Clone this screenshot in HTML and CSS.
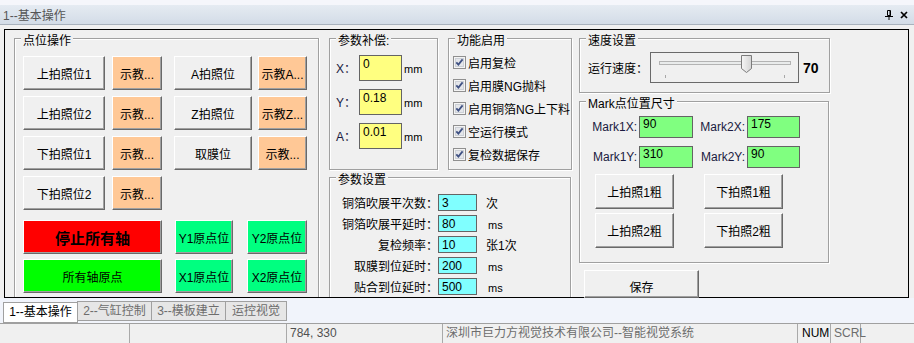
FILE: index.html
```html
<!DOCTYPE html>
<html lang="zh-CN">
<head>
    <meta charset="UTF-8">
    <title>1--基本操作</title>
    <link rel="stylesheet" href="styles.css">
</head>
<body>
    <div class="topgap"></div>
    <div class="titlebar">
        <span class="title">1--基本操作</span>
        <span class="tb-icons">
            <svg width="8" height="10" viewBox="0 0 8 10"><path d="M2.5 .5h3v5h-3z" fill="none" stroke="#000"/><path d="M5 1v5" stroke="#000"/><path d="M0 6.5h8M4 6v4" stroke="#000"/></svg>
            <svg width="8" height="8" viewBox="0 0 8 8"><path d="M1 1l6 6M7 1L1 7" stroke="#000" stroke-width="1.7"/></svg>
        </span>
    </div>

    <div class="frame">
        <!-- 点位操作 -->
        <div class="group open g-points">
            <div class="gtitle">点位操作</div>
            <div class="pt-grid">
                <button class="btn btn-pos">上拍照位1</button>
                <button class="btn teach btn-teach">示教...</button>
                <button class="btn btn-pos2">A拍照位</button>
                <button class="btn teach btn-teach2">示教A...</button>

                <button class="btn btn-pos">上拍照位2</button>
                <button class="btn teach btn-teach">示教...</button>
                <button class="btn btn-pos2">Z拍照位</button>
                <button class="btn teach btn-teach2">示教Z...</button>

                <button class="btn btn-pos">下拍照位1</button>
                <button class="btn teach btn-teach">示教...</button>
                <button class="btn btn-pos2">取膜位</button>
                <button class="btn teach btn-teach2">示教...</button>

                <button class="btn btn-pos">下拍照位2</button>
                <button class="btn teach btn-teach">示教...</button>
            </div>
            <div class="axis-grid">
                <button class="btn btn-stop">停止所有轴</button>
                <button class="btn btn-origin">Y1原点位</button>
                <button class="btn btn-origin w60">Y2原点位</button>
                <button class="btn btn-home">所有轴原点</button>
                <button class="btn btn-origin">X1原点位</button>
                <button class="btn btn-origin w60">X2原点位</button>
            </div>
        </div>

        <div class="col-mid">
            <div class="mid-top">
                <!-- 参数补偿 -->
                <div class="group g-comp">
                    <div class="gtitle">参数补偿:</div>
                    <div class="comp-rows">
                        <div class="comp-row"><label>X：</label><input class="field yellow" value="0"><span class="unit">mm</span></div>
                        <div class="comp-row"><label>Y：</label><input class="field yellow" value="0.18"><span class="unit">mm</span></div>
                        <div class="comp-row"><label>A：</label><input class="field yellow" value="0.01"><span class="unit">mm</span></div>
                    </div>
                </div>
                <!-- 功能启用 -->
                <div class="group g-func">
                    <div class="gtitle">功能启用</div>
                    <div class="checks">
                        <div class="check"><svg class="cb" width="13" height="13" viewBox="0 0 13 13"><rect x=".5" y=".5" width="12" height="12" fill="#f4f4f4" stroke="#8f8f8f"/><rect x="2.5" y="2.5" width="8" height="8" fill="#e4e6ea" stroke="#ccd0d6"/><path d="M3.3 6.3l2.1 2.3 4.2-5.2" fill="none" stroke="#3f5183" stroke-width="1.8"/></svg>启用复检</div>
                        <div class="check"><svg class="cb" width="13" height="13" viewBox="0 0 13 13"><rect x=".5" y=".5" width="12" height="12" fill="#f4f4f4" stroke="#8f8f8f"/><rect x="2.5" y="2.5" width="8" height="8" fill="#e4e6ea" stroke="#ccd0d6"/><path d="M3.3 6.3l2.1 2.3 4.2-5.2" fill="none" stroke="#3f5183" stroke-width="1.8"/></svg>启用膜NG抛料</div>
                        <div class="check"><svg class="cb" width="13" height="13" viewBox="0 0 13 13"><rect x=".5" y=".5" width="12" height="12" fill="#f4f4f4" stroke="#8f8f8f"/><rect x="2.5" y="2.5" width="8" height="8" fill="#e4e6ea" stroke="#ccd0d6"/><path d="M3.3 6.3l2.1 2.3 4.2-5.2" fill="none" stroke="#3f5183" stroke-width="1.8"/></svg>启用铜箔NG上下料</div>
                        <div class="check"><svg class="cb" width="13" height="13" viewBox="0 0 13 13"><rect x=".5" y=".5" width="12" height="12" fill="#f4f4f4" stroke="#8f8f8f"/><rect x="2.5" y="2.5" width="8" height="8" fill="#e4e6ea" stroke="#ccd0d6"/><path d="M3.3 6.3l2.1 2.3 4.2-5.2" fill="none" stroke="#3f5183" stroke-width="1.8"/></svg>空运行模式</div>
                        <div class="check"><svg class="cb" width="13" height="13" viewBox="0 0 13 13"><rect x=".5" y=".5" width="12" height="12" fill="#f4f4f4" stroke="#8f8f8f"/><rect x="2.5" y="2.5" width="8" height="8" fill="#e4e6ea" stroke="#ccd0d6"/><path d="M3.3 6.3l2.1 2.3 4.2-5.2" fill="none" stroke="#3f5183" stroke-width="1.8"/></svg>复检数据保存</div>
                    </div>
                </div>
            </div>
            <!-- 参数设置 -->
            <div class="group open g-param">
                <div class="gtitle">参数设置</div>
                <div class="param-rows">
                    <div class="param-row"><label>铜箔吹展平次数：</label><input class="pfield" value="3"><span class="punit">次</span></div>
                    <div class="param-row"><label>铜箔吹展平延时：</label><input class="pfield" value="80"><span class="punit ms">ms</span></div>
                    <div class="param-row"><label>复检频率：</label><input class="pfield" value="10"><span class="punit">张1次</span></div>
                    <div class="param-row"><label>取膜到位延时：</label><input class="pfield" value="200"><span class="punit ms">ms</span></div>
                    <div class="param-row"><label>贴合到位延时：</label><input class="pfield" value="500"><span class="punit ms">ms</span></div>
                </div>
            </div>
        </div>

        <div class="col-right">
            <!-- 速度设置 -->
            <div class="group g-speed">
                <div class="gtitle">速度设置</div>
                <div class="speed-row">
                    <label>运行速度：</label>
                    <div class="slider">
                        <svg width="147" height="29" viewBox="0 0 147 29">
                            <defs>
                                <linearGradient id="thumb" x1="0" x2="1">
                                    <stop offset="0" stop-color="#f6f6f6"/>
                                    <stop offset="1" stop-color="#d4d4d4"/>
                                </linearGradient>
                            </defs>
                            <rect x="8.5" y="8.5" width="131" height="3" fill="#e9ebeb" stroke="#b3b3b3"/>
                            <path d="M14.5 22v3M133.5 22v3" stroke="#a8a8a8"/>
                            <path d="M90.5 2.5h10v13l-5 4-5-4z" fill="url(#thumb)" stroke="#7b7b7b"/>
                        </svg>
                    </div>
                    <span class="speed-val">70</span>
                </div>
            </div>
            <!-- Mark点位置尺寸 -->
            <div class="group g-mark">
                <div class="gtitle">Mark点位置尺寸</div>
                <div class="mark-grid">
                    <label>Mark1X:</label><input class="mfield" value="90">
                    <label>Mark2X:</label><input class="mfield" value="175">
                    <label>Mark1Y:</label><input class="mfield" value="310">
                    <label>Mark2Y:</label><input class="mfield" value="90">
                </div>
                <div class="mark-btns">
                    <button class="btn">上拍照1粗</button>
                    <button class="btn">下拍照1粗</button>
                    <button class="btn">上拍照2粗</button>
                    <button class="btn">下拍照2粗</button>
                </div>
            </div>
            <button class="btn btn-save">保存</button>
        </div>
    </div>

    <div class="tabs">
        <div class="tab active">1--基本操作</div>
        <div class="tab">2--气缸控制</div>
        <div class="tab">3--模板建立</div>
        <div class="tab tab-short">运控视觉</div>
    </div>

    <div class="status">
        <div class="cell c1"></div>
        <div class="cell c2"></div>
        <div class="cell c3">784, 330</div>
        <div class="cell c4">深圳市巨力方视觉技术有限公司--智能视觉系统</div>
        <div class="cell c5">NUM</div>
        <div class="cell c6">SCRL</div>
    </div>
</body>
</html>
```

FILE: styles.css
```css
* {
    margin: 0;
    padding: 0;
    box-sizing: border-box;
}

body {
    width: 914px;
    height: 343px;
    overflow: hidden;
    background: #f0f0f0;
    font-family: "Liberation Sans", "Noto Sans CJK SC", sans-serif;
    font-size: 12px;
    color: #000;
}

button, input {
    font-family: inherit;
    font-size: 12px;
    color: #000;
}

.topgap {
    height: 5px;
    background: #f5f6fb;
}

.titlebar {
    height: 20px;
    display: flex;
    align-items: center;
    justify-content: space-between;
    padding: 0 6px 0 3px;
    background: linear-gradient(#e5ebf2, #d3dce7);
    border-bottom: 1px solid #a9b2bd;
    color: #555;
}

.tb-icons {
    display: flex;
    align-items: center;
    gap: 7px;
}

.frame {
    margin: 4px 0 0 4px;
    width: 905px;
    height: 269px;
    border: 1px solid #000;
    display: flex;
    align-items: flex-start;
    padding: 8px 0 0 9px;
}

/* group boxes */
.group {
    border: 1px solid #a0a0a0;
    box-shadow: inset 1px 1px 0 #fff, 1px 1px 0 #fff;
}

.group.open {
    border-bottom: 0;
    box-shadow: inset 1px 1px 0 #fff, 1px 0 0 #fff;
}

.gtitle {
    width: fit-content;
    margin: -5px 0 0 6px;
    padding: 0 2px;
    line-height: 14px;
    background: #f0f0f0;
}

/* buttons */
.btn {
    background: #f0f0f0;
    border: 1px solid;
    border-color: #fff #696969 #696969 #fff;
    box-shadow: inset -1px -1px 0 #a0a0a0;
    height: 100%;
    cursor: pointer;
}

.teach {
    background: #ffc896;
}

.g-points {
    width: 305px;
    height: 259px;
    margin-right: 10px;
}

.pt-grid {
    display: grid;
    grid-template-columns: 89px 62px 84px 49px;
    grid-auto-rows: 34px;
    row-gap: 6px;
    margin: 8px 0 0 8px;
}

.btn-pos { width: 82px; }
.btn-teach { width: 50px; }
.btn-pos2 { width: 78px; }
.btn-teach2 { width: 49px; }

.axis-grid {
    display: grid;
    grid-template-columns: 152px 72px 60px;
    grid-auto-rows: 34px;
    row-gap: 5px;
    margin: 10px 0 0 8px;
}

.btn-stop {
    width: 139px;
    background: #ff0000;
    font-size: 15px;
    font-weight: bold;
}

.btn-home {
    width: 139px;
    background: #00ff00;
}

.btn-origin {
    width: 58px;
    background: #00ff80;
}

.btn-origin.w60 {
    width: 60px;
}

/* middle column */
.col-mid {
    width: 243px;
    margin-right: 7px;
}

.mid-top {
    display: flex;
    gap: 10px;
}

.g-comp {
    width: 109px;
    height: 132px;
}

.g-func {
    width: 124px;
    height: 132px;
}

.comp-rows {
    display: flex;
    flex-direction: column;
    gap: 8px;
    margin: 7px 0 0 6px;
}

.comp-row {
    display: flex;
    align-items: flex-start;
}

.comp-row label {
    width: 23px;
    margin-top: 4px;
    color: #1a1a40;
}

.field {
    width: 43px;
    height: 26px;
    border: 1px solid #646464;
    padding: 1px 3px 9px;
    outline: none;
}

.yellow {
    background: #ffff80;
}

.unit {
    margin: 8px 0 0 2px;
    font-size: 11px;
}

.checks {
    margin: 3px 0 0 4px;
}

.check {
    display: flex;
    align-items: center;
    gap: 2px;
    height: 23px;
}

.g-param {
    width: 242px;
    height: 120px;
    margin-top: 7px;
}

.param-rows {
    margin-top: 5px;
}

.param-row {
    display: flex;
    align-items: center;
    height: 21px;
}

.param-row label {
    width: 108px;
    text-align: right;
}

.pfield {
    width: 39px;
    height: 17px;
    border: 1px solid #646464;
    background: #80ffff;
    padding: 0 3px;
    outline: none;
}

.punit {
    margin-left: 9px;
}

.punit.ms {
    font-size: 11px;
    margin: 3px 0 0 11px;
}

/* right column */
.col-right {
    width: 251px;
}

.g-speed {
    width: 251px;
    height: 55px;
}

.speed-row {
    display: flex;
    align-items: center;
    margin: 4px 0 0 8px;
}

.speed-row label {
    width: 62px;
}

.slider {
    width: 149px;
    height: 31px;
    border: 1px solid #6a6a6a;
}

.slider svg {
    display: block;
}

.speed-val {
    margin-left: 4px;
    font-size: 14px;
    font-weight: bold;
}

.g-mark {
    width: 250px;
    height: 162px;
    margin-top: 8px;
}

.mark-grid {
    display: grid;
    grid-template-columns: 59px 54px 54px 53px;
    grid-auto-rows: 22px;
    row-gap: 8px;
    align-items: center;
    margin-top: 5px;
}

.mark-grid label {
    text-align: right;
    padding-right: 2px;
    color: #1a1a40;
}

.mfield {
    width: 100%;
    height: 22px;
    border: 1px solid #646464;
    background: #80ff80;
    padding: 0 3px 7px;
    outline: none;
}

.mark-btns {
    display: grid;
    grid-template-columns: 79px 79px;
    grid-auto-rows: 35px;
    column-gap: 30px;
    row-gap: 4px;
    margin: 6px 0 0 15px;
}

.btn-save {
    display: block;
    width: 115px;
    height: 28px;
    margin: 7px 0 0 5px;
    padding-top: 5px;
}

/* bottom tabs */
.tabs {
    height: 26px;
    display: flex;
    align-items: flex-start;
    padding: 3px 0 0 3px;
    background: #f1f4fb;
    border-bottom: 1px solid #a0a0a0;
}

.tab {
    width: 75px;
    height: 20px;
    line-height: 18px;
    text-align: center;
    border: 1px solid #a0a0a0;
    background: #e6e6e6;
    color: #6d6d6d;
}

.tab + .tab {
    margin-left: -1px;
}

.tab.active {
    height: 21px;
    margin-top: 1px;
    background: #fff;
    color: #000;
}

.tab-short {
    width: 62px;
}

/* status bar */
.status {
    display: flex;
    height: 20px;
}

.cell {
    height: 20px;
    line-height: 19px;
    padding-left: 3px;
    border-right: 1px solid #a9a9a9;
    color: #6d6d6d;
    white-space: nowrap;
}

.c1 { width: 130px; }
.c2 { width: 157px; }
.c3 { width: 156px; color: #505050; }
.c4 { width: 355px; }
.c5 { width: 33px; padding-left: 4px; color: #000; }
.c6 { width: 30px; }
```
